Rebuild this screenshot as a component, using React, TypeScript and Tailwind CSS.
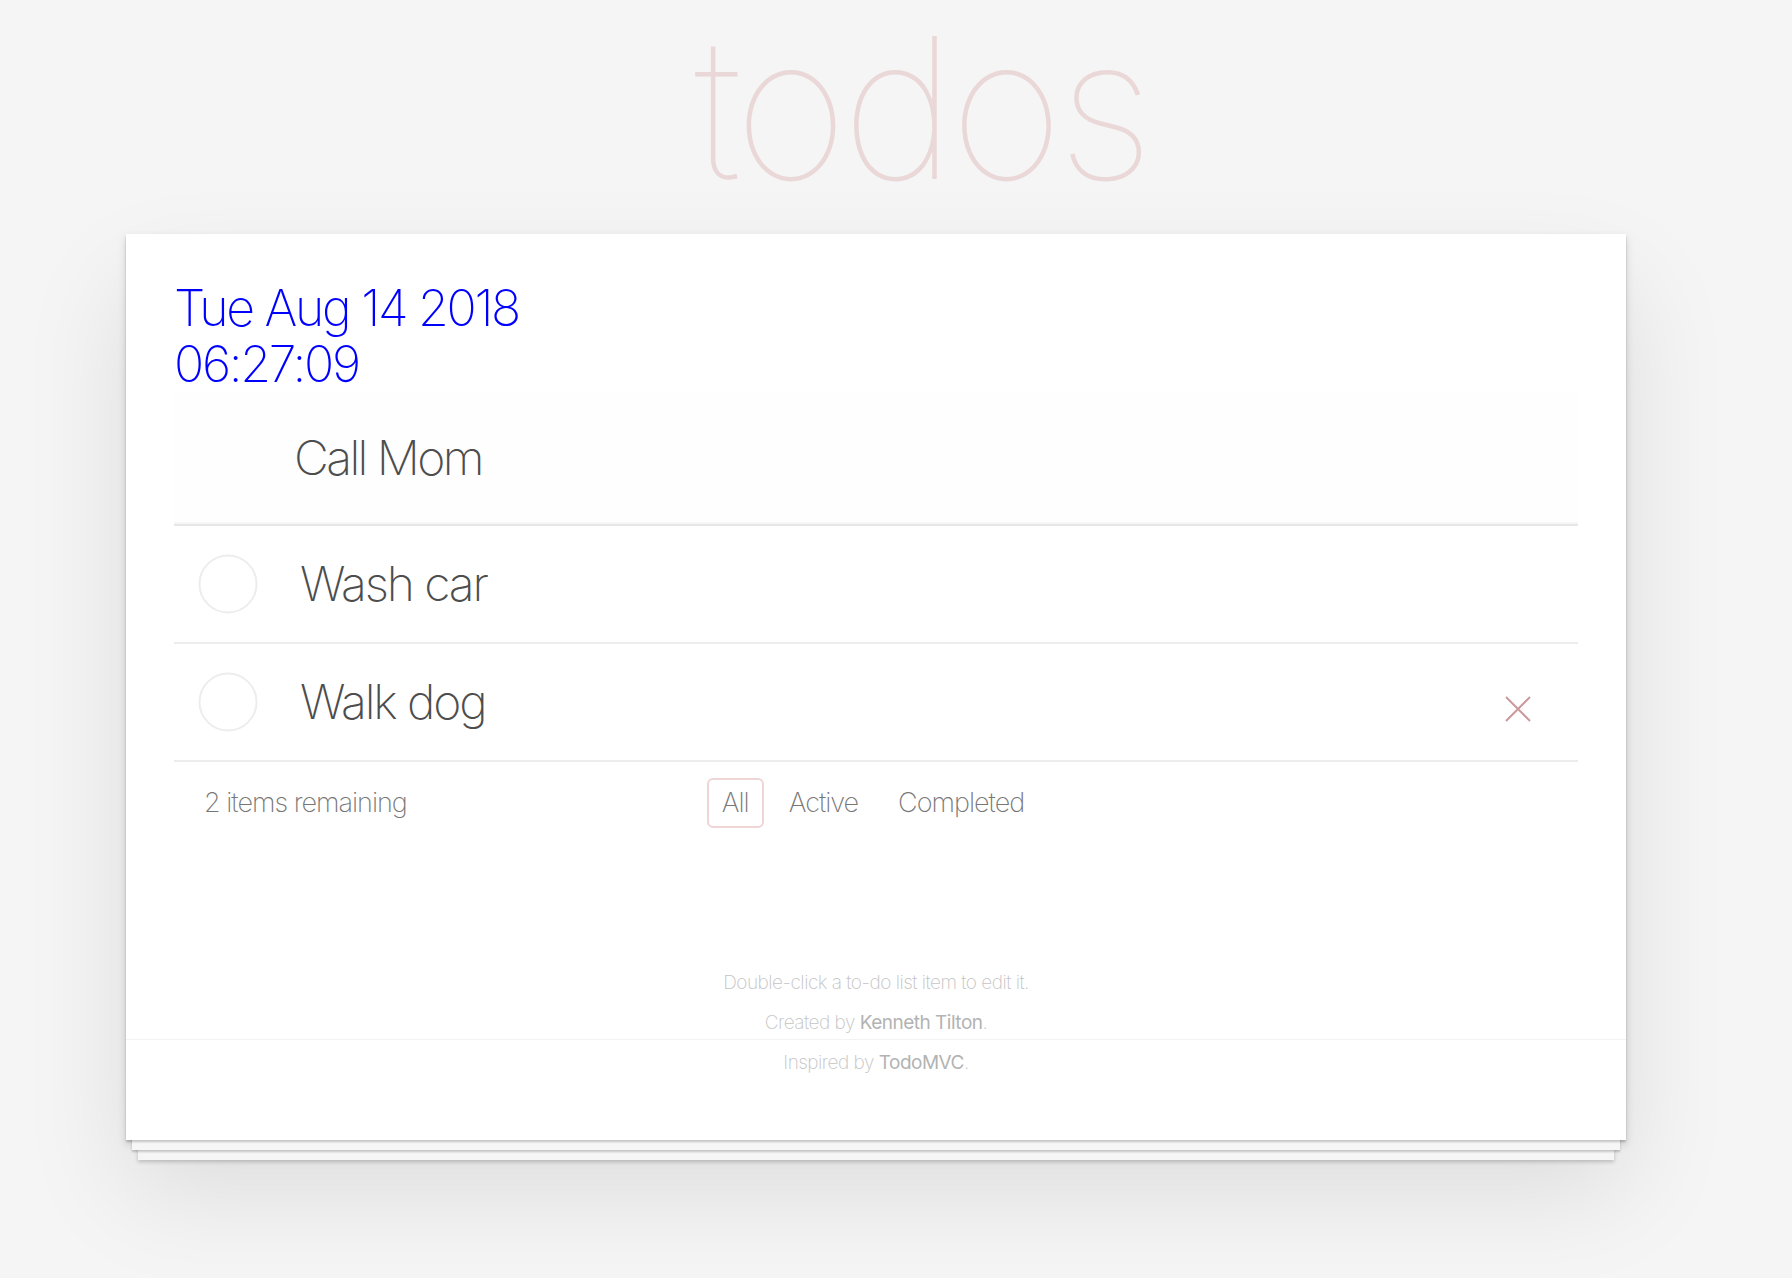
import React from 'react';

const Circle = () => (
  <svg width="60" height="60" viewBox="0 0 60 60" className="shrink-0">
    <circle cx="30" cy="30" r="28.5" fill="none" stroke="#ededed" strokeWidth="2" />
  </svg>
);

const App = () => {
  const todos = [
    { title: 'Wash car', hover: false },
    { title: 'Walk dog', hover: true },
  ];

  return (
    <div className="min-h-screen bg-[#f5f5f5] font-['Inter','Helvetica_Neue',sans-serif] [font-weight:250] text-[#4d4d4d] pb-[100px]">
      <div className="ml-[126px] w-[1500px]">
        {/* Title */}
        <h1 className="pl-[90px] text-center text-[196px] leading-[216px] font-thin text-[#ead7d7] tracking-[-6px]">
          todos
        </h1>

        {/* Card */}
        <div className="relative mt-[18px] bg-white shadow-[0_2px_2px_rgba(0,0,0,0.2),0_16px_0_-6px_#f6f6f6,0_18px_2px_-6px_rgba(0,0,0,0.2),0_32px_0_-12px_#f6f6f6,0_34px_4px_-12px_rgba(0,0,0,0.2),0_4px_8px_rgba(0,0,0,0.15),0_50px_100px_rgba(0,0,0,0.1)]">
          <div className="px-[48px] pt-[46px]">
            {/* Clock */}
            <div className="text-[50px] leading-[56px] [font-weight:150] tracking-[-2.3px] text-[#0000ff]">
              <div>Tue Aug 14 2018</div>
              <div>06:27:09</div>
            </div>

            {/* New todo */}
            <div className="h-[132px] flex items-center pl-[120px] bg-[#fefefe] shadow-[inset_0_-2px_1px_rgba(0,0,0,0.03)] text-[48px] tracking-[-2.6px]">
              Call Mom
            </div>

            {/* List */}
            <ul className="border-t-2 border-[#e6e6e6]">
              {todos.map((t) => (
                <li key={t.title} className="flex items-center h-[118px] border-b-2 border-[#ededed] pl-[24px] pr-[47px]">
                  <Circle />
                  <span className="ml-[42px] flex-1 text-[48px] leading-[58px] tracking-[-2.1px] text-[#4d4d4d]">{t.title}</span>
                  {t.hover && (
                    <svg width="26" height="26" viewBox="0 0 26 26" className="mt-[14px]">
                      <path d="M1 1 L25 25 M25 1 L1 25" stroke="#cc9a9a" strokeWidth="2" />
                    </svg>
                  )}
                </li>
              ))}
            </ul>

            {/* Footer */}
            <div className="relative flex items-center py-[16px] pl-[30px] text-[27px] tracking-[-1px] text-[#777]">
              <span className="leading-[50px]">2 items remaining</span>
              <div className="absolute inset-x-0 top-[16px] flex justify-center gap-[10px] pr-[6px]">
                <a className="px-[13px] py-[6px] leading-[34px] border-2 border-[#efd5d5] rounded-[6px]">All</a>
                <a className="px-[13px] py-[6px] leading-[34px] border-2 border-transparent rounded-[6px]">Active</a>
                <a className="px-[13px] py-[6px] leading-[34px] border-2 border-transparent rounded-[6px]">Completed</a>
              </div>
            </div>
          </div>

          {/* Info */}
          <div className="relative mt-[119px] pb-[57px] text-center text-[19px] tracking-[-0.5px] leading-[40px] text-[#c4c4c4] font-extralight">
            <p>Double-click a to-do list item to edit it.</p>
            <p>
              Created by <a className="font-normal text-[#b3b3b3]">Kenneth Tilton</a>.
            </p>
            <p>
              Inspired by <a className="font-normal text-[#b3b3b3]">TodoMVC</a>.
            </p>
            <div className="absolute inset-x-0 top-[76px] h-px bg-[#f3f3f3]" />
          </div>
        </div>
      </div>
    </div>
  );
};

export default App;
